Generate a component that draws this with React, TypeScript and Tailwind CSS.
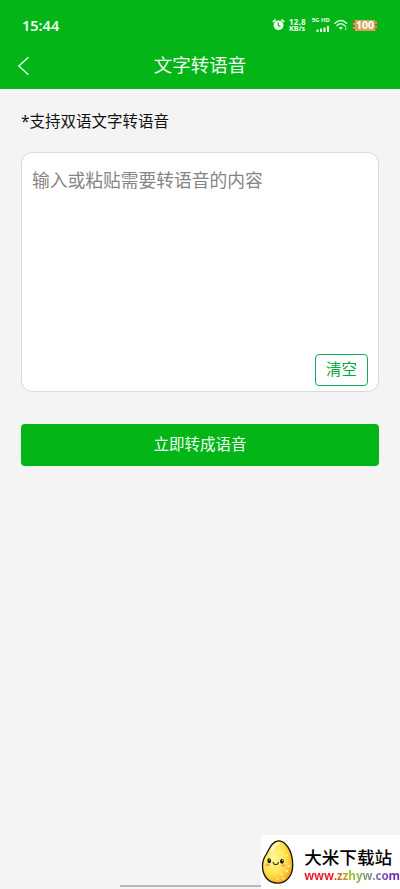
import { useState } from 'react';

function AlarmIcon() {
	return (
		<svg width="13" height="12" viewBox="0 0 13 12" fill="none">
			<circle cx="6.5" cy="6.3" r="4.9" fill="#eefff0" />
			<path
				d="M1.2 2.6 3.2 0.9M11.8 2.6 9.8 0.9"
				stroke="#eefff0"
				strokeWidth="1.5"
				strokeLinecap="round"
			/>
			<path d="M6.3 3.6v3l2.2 1" stroke="#04b518" strokeWidth="1.1" />
		</svg>
	);
}

function SignalIcon() {
	return (
		<svg width="14" height="6" viewBox="0 0 14 6" fill="#eefff0">
			<rect x="0.5" y="3.6" width="2" height="2.4" rx="0.5" />
			<rect x="4" y="2.6" width="2" height="3.4" rx="0.5" />
			<rect x="7.5" y="1.4" width="2" height="4.6" rx="0.5" />
			<rect x="11" y="0" width="2" height="6" rx="0.5" />
		</svg>
	);
}

function WifiIcon() {
	return (
		<svg width="14" height="12" viewBox="0 0 14 12" fill="none">
			<g stroke="#dcffe0" strokeWidth="1.5" strokeLinecap="round">
				<path d="M1 4.2Q6.8-1.2 12.6 4.2" />
				<path d="M3 6.5Q6.8 3.1 10.6 6.5" />
			</g>
			<path d="M4.8 8.5Q6.8 6.9 8.8 8.5L6.8 10.8Z" fill="#dcffe0" />
			<path d="M11.7 7v1.5M11.7 9.5V11" stroke="#dcffe0" strokeWidth="1.2" />
		</svg>
	);
}

function StatusBar() {
	return (
		<div className="flex h-12 items-center pt-[2px] pl-[22px] pr-[23px] text-[#eefff0]">
			<span className="flex-1 text-[14.5px] leading-none font-semibold">15:44</span>
			<div className="flex items-center">
				<AlarmIcon />
				<div className="ml-[4px] flex w-[18px] flex-col text-[8px] leading-[7px] font-bold whitespace-nowrap">
					<span className="tracking-[0.2px]">12.8</span>
					<span className="text-[7.2px]">KB/s</span>
				</div>
				<div className="ml-[3px] flex w-[20px] flex-col items-end">
					<span className="mb-[3px] text-[6px] leading-[5px] font-bold whitespace-nowrap">5G HD</span>
					<SignalIcon />
				</div>
				<div className="ml-[4px]">
					<WifiIcon />
				</div>
				<div className="ml-[5px] flex h-[11px] w-[24px] items-center justify-center rounded-[2px] border-x-2 border-dotted border-x-[#806d38] bg-[#d5a454] text-[10.5px] leading-none font-bold text-white">
					100
				</div>
			</div>
		</div>
	);
}

function Header() {
	return (
		<header className="h-[89px] bg-[#04b518]">
			<StatusBar />
			<div className="grid h-[35px] grid-cols-[60px_1fr_60px] items-center">
				<button className="pl-[17px]" aria-label="返回">
					<svg width="13" height="20" viewBox="0 0 13 20" fill="none">
						<path d="M11.4 1.2 1.8 10l9.6 8.8" stroke="#eefff0" strokeWidth="1.3" />
					</svg>
				</button>
				<h1 className="text-center text-[18.5px] leading-none text-[#f2fff3]">文字转语音</h1>
			</div>
		</header>
	);
}

function RiceLogo() {
	return (
		<svg width="40" height="54" viewBox="0 0 40 54" fill="none">
			<defs>
				<radialGradient id="grain" cx="0.38" cy="0.4" r="0.65">
					<stop offset="0" stopColor="#fff79e" />
					<stop offset="0.6" stopColor="#ffe34d" />
					<stop offset="1" stopColor="#f5a91c" />
				</radialGradient>
			</defs>
			<path
				d="M21 1.5C29 0.8 38 13 38.3 30C38.6 43 31 52.5 20 52.5C9 52.5 1.5 44 1.8 31C2 24 4 21 6.5 17.5C10 12 12.5 2.3 21 1.5Z"
				fill="url(#grain)"
				stroke="#15130a"
				strokeWidth="1.6"
			/>
			<path d="M13 13Q16 6 21 4.5" stroke="#fffbd0" strokeWidth="3" strokeLinecap="round" />
			<ellipse cx="10" cy="25.5" rx="2.3" ry="2.9" fill="#17120b" />
			<ellipse cx="25.3" cy="26.2" rx="2.3" ry="2.9" fill="#17120b" />
			<circle cx="10.7" cy="24.4" r="0.8" fill="#fff" />
			<circle cx="26" cy="25" r="0.8" fill="#fff" />
			<path
				d="M14.6 27.5Q15.5 30.5 17.8 30Q20.2 30.5 21 27.5"
				stroke="#30200e"
				strokeWidth="1.3"
				strokeLinecap="round"
			/>
			<ellipse cx="8" cy="30.5" rx="2.7" ry="1.6" fill="#ff9b78" />
			<ellipse cx="27" cy="31.3" rx="2.7" ry="1.6" fill="#ff9b78" />
			<g fill="#fff4bd">
				<circle cx="31.5" cy="19" r="1.2" />
				<circle cx="33.5" cy="32" r="1.3" />
				<circle cx="31" cy="38" r="1.7" />
				<circle cx="25" cy="42" r="1.3" />
				<circle cx="27" cy="47" r="1.2" />
				<circle cx="20" cy="48" r="1" />
			</g>
		</svg>
	);
}

function SiteBadge() {
	return (
		<div className="absolute right-0 bottom-0 flex h-[54px] w-[139px] overflow-hidden bg-white">
			<RiceLogo />
			<div className="flex flex-col pt-[12px] pl-[10px] whitespace-nowrap">
				<span className="text-[17.6px] leading-[20px] font-medium text-black">大米下载站</span>
				<span className="mt-[1px] bg-linear-to-r from-[#e5202b] from-30% via-[#9cc51f] via-50% to-[#7429be] to-90% bg-clip-text font-['Open_Sans'] text-[11.7px] leading-[15px] font-bold tracking-[-0.1px] text-transparent">
					www.zzhyw.com
				</span>
			</div>
		</div>
	);
}

export default function App() {
	const [text, setText] = useState('');

	return (
		<div className="relative flex h-[889px] w-[400px] flex-col overflow-hidden bg-[#f4f4f4] font-['Noto_Sans','Noto_Sans_CJK_SC',sans-serif]">
			<Header />
			<main className="flex flex-col px-[21px]">
				<p className="mt-[21px] text-[15.5px] leading-[22px] text-[#111]">*支持双语文字转语音</p>
				<div className="mt-[20px] flex h-[240px] flex-col rounded-[11px] border border-[#d9d9d9] bg-white px-[10px] pt-[14px] pb-[5px]">
					<textarea
						value={text}
						onChange={(e) => setText(e.target.value)}
						placeholder="输入或粘贴需要转语音的内容"
						className="w-full flex-1 resize-none text-[17.75px] leading-[26px] text-[#333] outline-none placeholder:text-[#858585]"
					/>
					<button
						onClick={() => setText('')}
						className="h-[32px] w-[53px] self-end rounded-[4px] border border-[#13a95b] text-[15.5px] leading-none text-[#08aa35]"
					>
						清空
					</button>
				</div>
				<button className="mt-[32px] h-[42px] rounded-[4px] bg-[#04b518] text-[15.5px] leading-none text-[#effff1]">
					立即转成语音
				</button>
			</main>
			<div className="mt-auto mb-[2px] h-[2px] w-[160px] self-center bg-[#b9b9b9]" />
			<SiteBadge />
		</div>
	);
}
